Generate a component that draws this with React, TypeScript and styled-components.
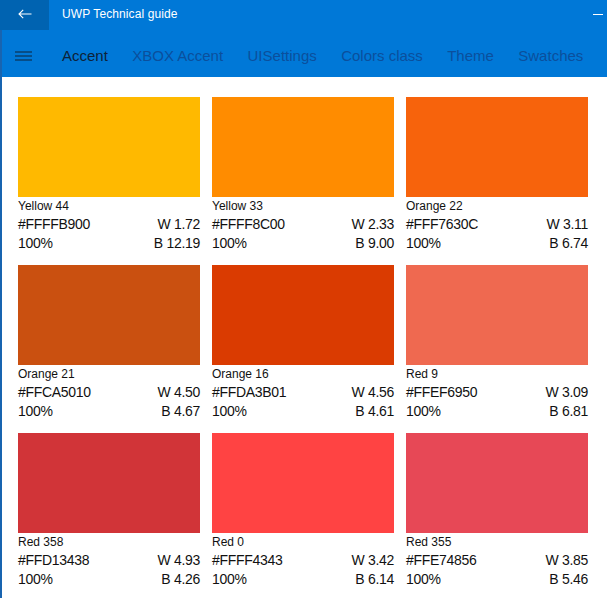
import React from 'react';
import styled, { createGlobalStyle } from 'styled-components';

const GlobalStyle = createGlobalStyle`
  html, body {
    margin: 0;
    padding: 0;
    background: #ffffff;
    font-family: "Liberation Sans", Arial, sans-serif;
  }
`;

const Window = styled.div`
  width: 607px;
  height: 598px;
  display: flex;
  flex-direction: column;
  overflow: hidden;
`;

const TitleBar = styled.div`
  height: 30px;
  display: flex;
  align-items: center;
  background: #0078d7;
  color: #ffffff;
  position: relative;
`;

const BackButton = styled.div`
  width: 49px;
  height: 30px;
  display: flex;
  align-items: center;
  justify-content: center;
  padding-bottom: 3px;
  box-sizing: border-box;
  background: #0063b1;
`;

const Title = styled.span`
  margin-left: 13px;
  padding-bottom: 3px;
  font-size: 12px;
  letter-spacing: 0.1px;
`;

const Minimize = styled.span`
  position: absolute;
  right: 4px;
  top: 14px;
  width: 10px;
  height: 1px;
  background: #ffffff;
`;

const Body = styled.div`
  flex: 1;
  display: flex;
  flex-direction: column;
  border-left: 2px solid #1864b0;
`;

const NavBar = styled.div`
  height: 47px;
  display: flex;
  align-items: center;
  padding-top: 4px;
  box-sizing: border-box;
  background: #0078d7;
`;

const Hamburger = styled.div`
  width: 60px;
  display: flex;
  align-items: center;
  justify-content: center;
  padding-right: 18px;
  box-sizing: border-box;
`;

const Tabs = styled.div`
  display: flex;
  gap: 24.4px;
  white-space: nowrap;
`;

const Tab = styled.span<{ active?: boolean }>`
  font-size: 15px;
  color: ${({ active }) => (active ? '#0e2238' : '#0b4f9c')};
`;

const Content = styled.div`
  flex: 1;
  padding: 20px 17px 0 16px;
  display: grid;
  grid-template-columns: repeat(3, 182px);
  grid-auto-rows: 156px;
  column-gap: 12px;
  row-gap: 12px;
  align-content: start;
`;

const Card = styled.div`
  display: flex;
  flex-direction: column;
`;

const Swatch = styled.div<{ color: string }>`
  height: 100px;
  background: ${({ color }) => color};
`;

const Name = styled.div`
  font-size: 12px;
  line-height: 17px;
  margin-top: 1px;
  color: #111111;
`;

const Row = styled.div`
  display: flex;
  justify-content: space-between;
  font-size: 14px;
  line-height: 19px;
  letter-spacing: -0.3px;
  color: #111111;
`;

type Entry = { name: string; hex: string; color: string; w: string; b: string };

const entries: Entry[] = [
  { name: 'Yellow 44', hex: '#FFFFB900', color: '#ffb900', w: '1.72', b: '12.19' },
  { name: 'Yellow 33', hex: '#FFFF8C00', color: '#ff8c00', w: '2.33', b: '9.00' },
  { name: 'Orange 22', hex: '#FFF7630C', color: '#f7630c', w: '3.11', b: '6.74' },
  { name: 'Orange 21', hex: '#FFCA5010', color: '#ca5010', w: '4.50', b: '4.67' },
  { name: 'Orange 16', hex: '#FFDA3B01', color: '#da3b01', w: '4.56', b: '4.61' },
  { name: 'Red 9', hex: '#FFEF6950', color: '#ef6950', w: '3.09', b: '6.81' },
  { name: 'Red 358', hex: '#FFD13438', color: '#d13438', w: '4.93', b: '4.26' },
  { name: 'Red 0', hex: '#FFFF4343', color: '#ff4343', w: '3.42', b: '6.14' },
  { name: 'Red 355', hex: '#FFE74856', color: '#e74856', w: '3.85', b: '5.46' },
];

const tabs = ['Accent', 'XBOX Accent', 'UISettings', 'Colors class', 'Theme', 'Swatches'];

export default function App() {
  return (
    <Window>
      <GlobalStyle />
      <TitleBar>
        <BackButton>
          <svg width="14" height="10" viewBox="0 0 14 10" fill="none" stroke="#ffffff" strokeWidth="1.1">
            <path d="M13.5 5H1M5.2 0.8L1 5l4.2 4.2" />
          </svg>
        </BackButton>
        <Title>UWP Technical guide</Title>
        <Minimize />
      </TitleBar>
      <Body>
        <NavBar>
          <Hamburger>
            <svg width="17" height="10" viewBox="0 0 17 10" stroke="#0e2238" strokeWidth="1.2">
              <path d="M0 1h17M0 5h17M0 9h17" />
            </svg>
          </Hamburger>
          <Tabs>
            {tabs.map((t, i) => (
              <Tab key={t} active={i === 0}>
                {t}
              </Tab>
            ))}
          </Tabs>
        </NavBar>
        <Content>
          {entries.map((e) => (
            <Card key={e.name}>
              <Swatch color={e.color} />
              <Name>{e.name}</Name>
              <Row>
                <span>{e.hex}</span>
                <span>W {e.w}</span>
              </Row>
              <Row>
                <span>100%</span>
                <span>B {e.b}</span>
              </Row>
            </Card>
          ))}
        </Content>
      </Body>
    </Window>
  );
}
